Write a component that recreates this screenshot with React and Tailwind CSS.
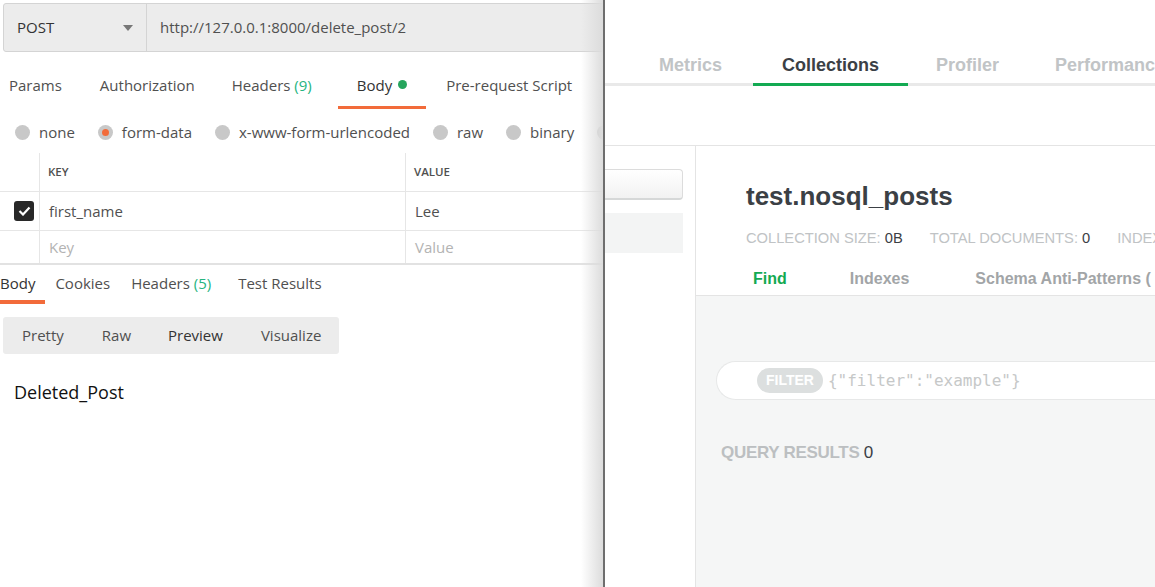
import React from "react";

const pm = { fontFamily: '"Open Sans", "Noto Sans", sans-serif' };
const cp = { fontFamily: '"Liberation Sans", Arial, sans-serif' };
const mono = { fontFamily: '"DejaVu Sans Mono", "Liberation Mono", monospace' };

const Radio = ({ label, checked }) => (
  <div className="flex items-center gap-[9px] shrink-0">
    <span className="w-[15px] h-[15px] rounded-full bg-[#c8c8c8] flex items-center justify-center">
      {checked && <span className="w-[7px] h-[7px] rounded-full bg-[#f26b3a]" />}
    </span>
    <span>{label}</span>
  </div>
);

const PostmanPane = () => (
  <div className="relative w-[603px] h-full shrink-0 overflow-hidden bg-white text-[15px] text-[#505050]" style={pm}>
    {/* url bar */}
    <div className="pl-[3px] pt-[3px]">
      <div className="flex h-[49px] border border-[#d4d4d4] rounded-l-[3px] bg-[#ececec]">
        <div className="w-[143px] flex items-center justify-between pl-[13px] pr-[13px] border-r border-[#d4d4d4] text-[#333]">
          <span>POST</span>
          <svg width="10" height="6" viewBox="0 0 10 6"><path d="M0 0h10L5 6z" fill="#777" /></svg>
        </div>
        <div className="flex-1 flex items-center pl-[13px] text-[#505050] whitespace-nowrap">http://127.0.0.1:8000/delete_post/2</div>
      </div>
    </div>

    {/* request tabs */}
    <div className="flex h-[54px] items-end pl-[9px] whitespace-nowrap">
      <div className="pb-[10px] mr-[38px]">Params</div>
      <div className="pb-[10px] mr-[37px]">Authorization</div>
      <div className="pb-[10px] mr-[26px]">Headers <span className="text-[#26b47f]">(9)</span></div>
      <div className="relative pb-[10px] px-[19px] mr-[20px] text-[#333] flex items-center gap-[6px]">
        Body <span className="w-[9px] h-[9px] rounded-full bg-[#26a55d] inline-block" />
        <span className="absolute left-0 right-0 bottom-[-3px] h-[3px] bg-[#f26b3a]" />
      </div>
      <div className="pb-[10px]">Pre-request Script</div>
    </div>

    {/* radio row */}
    <div className="flex items-center h-[47px] pt-[5px] pl-[15px] gap-[23px] whitespace-nowrap">
      <Radio label="none" />
      <Radio label="form-data" checked />
      <Radio label="x-www-form-urlencoded" />
      <Radio label="raw" />
      <Radio label="binary" />
      <Radio label="" />
    </div>

    {/* table */}
    <div className="border-b-2 border-[#e2e2e2]">
      <div className="flex h-[39px] border-b border-[#e6e6e6] text-[11.5px] font-semibold text-[#505050]">
        <div className="w-[40px] border-r border-[#e6e6e6]" />
        <div className="w-[366px] border-r border-[#e6e6e6] flex items-center pl-[8px]">KEY</div>
        <div className="flex-1 flex items-center pl-[8px]">VALUE</div>
      </div>
      <div className="flex h-[39px] border-b border-[#e6e6e6]">
        <div className="w-[40px] border-r border-[#e6e6e6] flex items-center pl-[14px]">
          <span className="w-[20px] h-[20px] rounded-[3px] bg-[#282828] flex items-center justify-center">
            <svg width="13" height="10" viewBox="0 0 13 10"><path d="M1.5 5l3.5 3.5L11.5 1.5" stroke="#fff" strokeWidth="2.2" fill="none" /></svg>
          </span>
        </div>
        <div className="w-[366px] border-r border-[#e6e6e6] flex items-center pl-[9px]">first_name</div>
        <div className="flex-1 flex items-center pl-[9px]">Lee</div>
      </div>
      <div className="flex h-[32px] text-[#b3b3b3]">
        <div className="w-[40px] border-r border-[#e6e6e6]" />
        <div className="w-[366px] border-r border-[#e6e6e6] flex items-center pl-[9px]">Key</div>
        <div className="flex-1 flex items-center pl-[9px]">Value</div>
      </div>
    </div>

    {/* response tabs */}
    <div className="flex h-[39px] items-end whitespace-nowrap">
      <div className="relative pb-[10px] pr-[10px] text-[#333]">
        Body
        <span className="absolute left-0 right-0 bottom-0 h-[4px] bg-[#f26b3a]" />
      </div>
      <div className="pb-[10px] ml-[10px] mr-[21px]">Cookies</div>
      <div className="pb-[10px] mr-[27px]">Headers <span className="text-[#26b47f]">(5)</span></div>
      <div className="pb-[10px]">Test Results</div>
    </div>

    <div className="pl-[3px] pt-[13px]">
      <div className="w-[336px] h-[37px] rounded-[3px] bg-[#ececec] flex items-center pl-[19px] whitespace-nowrap">
        <span className="mr-[38px]">Pretty</span>
        <span className="mr-[37px]">Raw</span>
        <span className="mr-[38px] text-[#333]">Preview</span>
        <span>Visualize</span>
      </div>
    </div>

    <div className="pl-[14px] pt-[25px] text-[18px] text-[#111]">Deleted_Post</div>

    {/* edge shadow */}
    <div className="absolute top-0 right-0 h-full w-[22px] bg-gradient-to-r from-transparent to-[#dcdcdc] pointer-events-none" />
  </div>
);

const CompassPane = () => (
  <div className="flex-1 h-full flex flex-col border-l-2 border-[#6e6e6e] bg-white overflow-hidden" style={cp}>
    {/* top tabs */}
    <div className="h-[146px] border-b border-[#e4e4e4] shrink-0">
      <div className="h-[86px] flex items-end border-b-[3px] border-[#e9e9e9] whitespace-nowrap text-[18px] font-bold text-[#c1c4c6]">
        <div className="ml-[54px] pb-[4px] mr-[31px]">Metrics</div>
        <div className="relative px-[29px] pb-[4px] text-[#3b4045]">
          Collections
          <span className="absolute left-0 right-0 bottom-[-3px] h-[3px] bg-[#13aa52]" />
        </div>
        <div className="ml-[28px] pb-[4px] mr-[56px]">Profiler</div>
        <div className="pb-[4px]">Performance</div>
      </div>
    </div>

    <div className="flex flex-1">
      {/* sidebar */}
      <div className="w-[91px] shrink-0 border-r border-[#e4e4e4] pt-[23px]">
        <div className="w-[78px] h-[31px] rounded-r-[4px] border border-l-0 border-[#dcdcdc] border-b-2 border-b-[#d6d8d8] bg-gradient-to-b from-white to-[#f2f2f2]" />
        <div className="w-[78px] h-[40px] mt-[13px] bg-[#f3f4f4]" />
      </div>

      {/* main */}
      <div className="flex-1 flex flex-col">
        <div className="h-[150px] border-b border-[#e4e4e4] pl-[50px] whitespace-nowrap">
          <div className="pt-[35px] text-[26px] font-bold text-[#3b4045] leading-[30px]">test.nosql_posts</div>
          <div className="mt-[17px] text-[14.7px] text-[#c0c3c5] leading-[20px]">
            COLLECTION SIZE: <span className="text-[#3b4045]">0B</span>
            <span className="ml-[27px]">TOTAL DOCUMENTS: </span><span className="text-[#3b4045]">0</span>
            <span className="ml-[27px]">INDEXES</span>
          </div>
          <div className="mt-[21px] flex text-[16px] font-bold text-[#a2a5a7] leading-[20px]">
            <span className="ml-[7px] text-[#13aa52] mr-[63px]">Find</span>
            <span className="mr-[66px]">Indexes</span>
            <span>Schema Anti-Patterns (</span>
          </div>
        </div>
        <div className="flex-1 bg-[#f5f6f6] pl-[20px] pt-[65px]">
          <div className="h-[39px] rounded-l-full border border-r-0 border-[#e7e8e8] bg-white flex items-center pl-[40px] whitespace-nowrap">
            <span className="h-[25px] px-[9px] rounded-full bg-[#dcdfdf] text-white text-[14px] font-bold flex items-center">FILTER</span>
            <span className="ml-[5px] text-[16px] text-[#c6c8c8]" style={mono}>{'{"filter":"example"}'}</span>
          </div>
          <div className="mt-[40px] pl-[5px] text-[17px] font-bold text-[#bcbfc1] tracking-[-0.3px]">
            QUERY RESULTS <span className="font-normal text-[#3b4045]">0</span>
          </div>
        </div>
      </div>
    </div>
  </div>
);

export default function App() {
  return (
    <div className="flex w-[1155px] h-[587px] overflow-hidden bg-white">
      <PostmanPane />
      <CompassPane />
    </div>
  );
}
